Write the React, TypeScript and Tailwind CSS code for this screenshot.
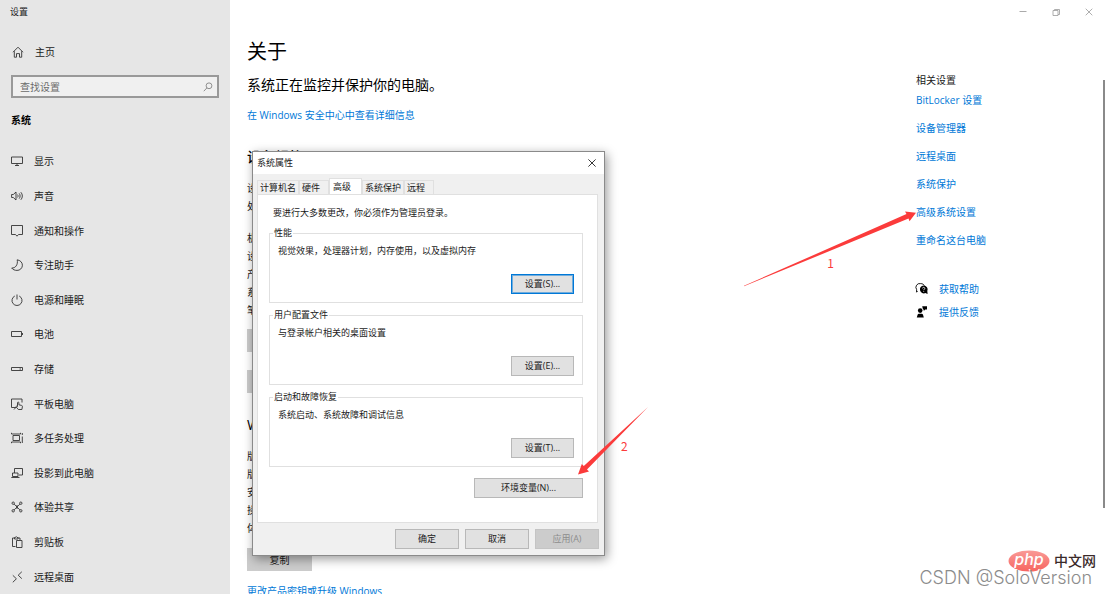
import type { ReactNode } from "react";

const icons: Record<string, ReactNode> = {
  home: <path d="M1 6.2 6 1.2l5 5M2.3 5.2v6h2.2V7.6h3v3.6h2.2v-6" />,
  display: <path d="M.5 2h11v6.5H.5zM6 8.5v2M4 10.5h4" />,
  sound: (
    <path d="M.6 4.5v3h1.7L5 10V2L2.3 4.5zM6.6 4.6c.6.9.6 1.9 0 2.8M8.2 3.4c1.2 1.6 1.2 3.6 0 5.2M9.8 2.2c2 2.3 2 5.3 0 7.6" />
  ),
  notify: <path d="M.5 .5h11v9H7.500L6 11.200 4.500 9.500H.5z" />,
  moon: <path d="M6.200.8c3 .5 5.200 2.600 5.200 5.400A5.200 5.200 0 0 1 6 11.400C3.800 11.400 1.800 10.600.7 9c3.600.4 6.500-3.200 5.500-8.200z" />,
  power: <path d="M6 .5v5M3.800 2A5 5 0 1 0 8.200 2" />,
  battery: <path d="M.5 3.500h10v5H.5zM11.500 5v2" />,
  storage: <path d="M.5 4.500h11v3H.5zM8.500 6h1.500" />,
  tablet: (
    <path d="M5 9.500H.5V1h10.500v3.500M3 11.500l1.800-2M6.500 8.500V4.800c0-1 1.400-1 1.400 0v2l2.600.6c.8.2 1 .6.9 1.300l-.5 2.800H7.300L5.200 9c-.3-.7.4-1.300 1.300-.5z" />
  ),
  multitask: (
    <path d="M2 3.500h6.500v5H2zM.5 .800v1.200h9V.8M.5 11.200V10h9v1.200M11.300 1v2M11.300 4.500V11" />
  ),
  project: <path d="M3.500 6V1.500h8V8H8M1.500 6h5.500v3.500H1.500zM.3 10.500h8.200" />,
  share: (
    <>
      <path d="M3 3c2 2.600 4 2.600 6 0M3 9c2-2.600 4-2.600 6 0M4.500 4.500l3 3M7.500 4.500l-3 3" />
      <circle cx="2.200" cy="2.200" r="1.200" />
      <circle cx="9.800" cy="2.200" r="1.200" />
      <circle cx="2.200" cy="9.800" r="1.200" />
      <circle cx="9.800" cy="9.800" r="1.200" />
    </>
  ),
  clipboard: <path d="M4.500 10.500H1.500V2h2M7 2h2v2M3.500 3V1.500h1L5.200.5l.8 1h1V3zM5.500 4.500h5.500v7H5.500z" />,
  remote: <path d="M1.800 4.300l3.600 3.500-3.600 3.500M10.800.8 7.200 4.200l3.600 3.400" />,
};

function Icon({ name }: { name: string }) {
  return (
    <svg
      viewBox="0 0 12 12"
      className="size-3 shrink-0 overflow-visible"
      fill="none"
      stroke="#333"
      strokeWidth="0.900"
      aria-hidden="true"
    >
      {icons[name]}
    </svg>
  );
}

const navItems = [
  { icon: "display", label: "显示" },
  { icon: "sound", label: "声音" },
  { icon: "notify", label: "通知和操作" },
  { icon: "moon", label: "专注助手" },
  { icon: "power", label: "电源和睡眠" },
  { icon: "battery", label: "电池" },
  { icon: "storage", label: "存储" },
  { icon: "tablet", label: "平板电脑" },
  { icon: "multitask", label: "多任务处理" },
  { icon: "project", label: "投影到此电脑" },
  { icon: "share", label: "体验共享" },
  { icon: "clipboard", label: "剪贴板" },
  { icon: "remote", label: "远程桌面" },
];

const relatedLinks = [
  "BitLocker 设置",
  "设备管理器",
  "远程桌面",
  "系统保护",
  "高级系统设置",
  "重命名这台电脑",
];

const tabs = [
  { label: "计算机名", className: "h-[14px] px-[2px]" },
  { label: "硬件", className: "h-[14px] pr-2 pl-[2px]" },
  { label: "高级", className: "h-4 bg-white pr-[10px] pl-[3px]", active: true },
  { label: "系统保护", className: "h-[14px] px-[2px]" },
  { label: "远程", className: "h-[14px] pr-2 pl-[2px]" },
];

const groups = [
  { title: "性能", text: "视觉效果，处理器计划，内存使用，以及虚拟内存", button: "设置(S)...", focused: true },
  { title: "用户配置文件", text: "与登录帐户相关的桌面设置", button: "设置(E)..." },
  { title: "启动和故障恢复", text: "系统启动、系统故障和调试信息", button: "设置(T)..." },
];

function Sidebar() {
  return (
    <aside className="flex w-[230px] shrink-0 flex-col bg-[#e6e6e6] text-[#1a1a1a]">
      <div className="h-6 pl-[10px] text-[9px] leading-6">设置</div>
      <a href="#home" className="mt-5 flex h-4 items-center gap-[11px] pl-3">
        <Icon name="home" />
        主页
      </a>
      <label className="mt-[15px] mr-[11px] ml-[11px] flex h-[23px] items-center border-2 border-[#999] bg-[#f0f0f0] pr-1 pl-[7px]">
        <input
          type="text"
          aria-label="查找设置"
          placeholder="查找设置"
          className="min-w-0 flex-1 bg-transparent outline-none placeholder:text-[#6b6b6b]"
        />
        <svg viewBox="0 0 10 10" className="size-[10px]" fill="none" stroke="#777" strokeWidth="0.800" aria-hidden="true">
          <circle cx="6" cy="3.800" r="2.900" />
          <path d="M3.900 5.900.8 9.200" />
        </svg>
      </label>
      <h2 className="mt-[14px] pl-[11px] font-bold text-black">系统</h2>
      <nav className="mt-4 flex flex-1 flex-col">
        {navItems.map((item) => (
          <a key={item.label} href="#nav" className="flex flex-1 items-center gap-[11px] pl-[11px]">
            <Icon name={item.icon} />
            {item.label}
          </a>
        ))}
      </nav>
    </aside>
  );
}

function WindowControls() {
  return (
    <div className="flex h-6 shrink-0 justify-end pr-px">
      <button type="button" aria-label="最小化" className="flex w-[33px] items-center justify-center">
        <svg viewBox="0 0 8 8" className="size-2" stroke="#aaa" aria-hidden="true">
          <path d="M.5 3.500h7" />
        </svg>
      </button>
      <button type="button" aria-label="还原" className="flex w-[33px] items-center justify-center">
        <svg viewBox="0 0 8 8" className="size-2" fill="none" stroke="#999" aria-hidden="true">
          <path d="M1 2.500h5v5H1zM2.500 2.500v-1h5v5H6" strokeWidth="0.800" />
        </svg>
      </button>
      <button type="button" aria-label="关闭" className="flex w-[33px] items-center justify-center">
        <svg viewBox="0 0 8 8" className="size-2" stroke="#999" strokeWidth="0.800" aria-hidden="true">
          <path d="M.7.7l6.600 6.600M7.300.7.7 7.300" />
        </svg>
      </button>
    </div>
  );
}

function About() {
  return (
    <section className="flex-1 pt-[14px] pl-[17px] text-[#1a1a1a]">
      <h1 className="text-[20px] leading-7 text-black">关于</h1>
      <p className="mt-[9px] text-[14px] leading-5 text-black">系统正在监控并保护你的电脑。</p>
      <a href="#security" className="mt-3 block text-[#0078d7]">
        在 Windows 安全中心中查看详细信息
      </a>
      <h2 className="mt-6 text-[14px] leading-5 font-medium text-black">设备规格</h2>
      <ul className="mt-3 leading-[18px]">
        <li>设备名称</li>
        <li>处理器</li>
        <li className="mt-[14px]">机带 RAM</li>
        <li>设备 ID</li>
        <li>产品 ID</li>
        <li>系统类型</li>
        <li>笔和触控</li>
      </ul>
      <button type="button" className="mt-[10px] block h-[23px] w-[65px] bg-[#ccc]">
        复制
      </button>
      <button type="button" className="mt-[18px] block h-[23px] w-[120px] bg-[#ccc]">
        重命名这台电脑
      </button>
      <h2 className="mt-[22px] text-[14px] leading-5 font-medium text-black">Windows 规格</h2>
      <ul className="mt-3 leading-[18px]">
        <li>版本</li>
        <li>版本号</li>
        <li>安装日期</li>
        <li>操作系统内部版本</li>
        <li>体验</li>
      </ul>
      <button type="button" className="mt-[11px] block h-[23px] w-[65px] bg-[#ccc]">
        复制
      </button>
      <a href="#upgrade" className="mt-3 block text-[#0078d7]">
        更改产品密钥或升级 Windows
      </a>
    </section>
  );
}

function Related() {
  return (
    <aside className="w-[187px] shrink-0 pt-12 text-[#0078d7]">
      <h2 className="text-[#1a1a1a]">相关设置</h2>
      <nav className="mt-1 flex flex-col items-start gap-3">
        {relatedLinks.map((link) => (
          <a key={link} href="#related">
            {link}
          </a>
        ))}
      </nav>
      <div className="mt-[33px] flex flex-col items-start gap-[7px]">
        <a href="#help" className="flex items-center gap-[11px]">
          <svg viewBox="0 0 12 12" className="size-3 overflow-visible" aria-hidden="true">
            <path d="M1.500 8 .6 9.200V6.500A3.800 3.800 0 0 1 4.500.6c2 0 3.200.8 3.900 2" fill="none" stroke="#000" strokeWidth="0.900" />
            <path d="M7.600 2.400a4 4 0 0 1 3.700 5.600l.3 3-2.200-.9a4 4 0 1 1-1.800-7.700z" fill="#000" />
            <path d="M6.500 5.400c0-1.500 2.300-1.400 2.300 0 0 .8-1.100.8-1.100 1.700M7.700 7.900v.9" fill="none" stroke="#fff" strokeWidth="0.800" />
          </svg>
          获取帮助
        </a>
        <a href="#feedback" className="flex items-center gap-[11px]">
          <svg viewBox="0 0 12 12" className="size-3 overflow-visible" fill="#000" aria-hidden="true">
            <circle cx="4.200" cy="4.600" r="2.300" />
            <path d="M.8 11.500l.8-2.800c.2-.7.600-1 1.300-1h2.800c.7 0 1.100.3 1.300 1l.8 2.800zM6.200.2h4.800v3.200H9.200L7.800 4.900V3.400H7z" />
          </svg>
          提供反馈
        </a>
      </div>
    </aside>
  );
}

function DialogButton({ children, className = "" }: { children: ReactNode; className?: string }) {
  return (
    <button type="button" className={`h-5 border bg-[#e1e1e1] ${className}`}>
      {children}
    </button>
  );
}

function SystemDialog() {
  return (
    <div
      role="dialog"
      aria-label="系统属性"
      className="absolute top-[151px] left-[252px] w-[353px] border border-[#8a8a8a] bg-[#f0f0f0] text-[9px] leading-3 text-[#1a1a1a] shadow-[2px_3px_10px_rgba(0,0,0,0.4)]"
    >
      <div className="flex h-[22px] items-center justify-between bg-white pr-2 pl-1">
        <span>系统属性</span>
        <button type="button" aria-label="关闭" className="flex size-2">
          <svg viewBox="0 0 8 8" className="size-2" stroke="#222" strokeWidth="0.900" aria-hidden="true">
            <path d="M.4.4l7.200 7.200M7.600.4.4 7.600" />
          </svg>
        </button>
      </div>
      <div className="pt-1 pr-[6px] pl-1">
        <div role="tablist" className="flex items-end">
          {tabs.map((tab) => (
            <button
              key={tab.label}
              type="button"
              role="tab"
              aria-selected={!!tab.active}
              className={`border border-b-0 border-[#e0e0e0] ${tab.className}`}
            >
              {tab.label}
            </button>
          ))}
        </div>
        <div className="border border-[#e0e0e0] bg-white pt-3 pr-[14px] pb-6 pl-[11px]">
          <p className="ml-1">要进行大多数更改，你必须作为管理员登录。</p>
          <div className="mt-2 flex flex-col gap-[6px]">
            {groups.map((group) => (
              <fieldset key={group.title} className="h-[76px] border border-[#e0e0e0] px-2">
                <legend className="-ml-[5px] px-[1px]">{group.title}</legend>
                <p className="pt-[6px]">{group.text}</p>
                <div className="mt-[17px] flex justify-end">
                  <DialogButton
                    className={
                      group.focused ? "w-[63px] border-[#0078d7] ring-1 ring-[#0078d7]/50 ring-inset" : "w-[63px] border-[#b8b8b8]"
                    }
                  >
                    {group.button}
                  </DialogButton>
                </div>
              </fieldset>
            ))}
          </div>
          <div className="mt-[11px] flex justify-end">
            <DialogButton className="w-[109px] border-[#b8b8b8]">环境变量(N)...</DialogButton>
          </div>
        </div>
      </div>
      <div className="flex justify-end gap-[6px] px-[5px] pt-[6px] pb-[6px]">
        <DialogButton className="w-16 border-[#b8b8b8]">确定</DialogButton>
        <DialogButton className="w-16 border-[#b8b8b8]">取消</DialogButton>
        <button type="button" disabled className="h-5 w-16 border border-[#c4c4c4] bg-[#ccc] text-[#8c8c8c]">
          应用(A)
        </button>
      </div>
    </div>
  );
}

function Arrows() {
  return (
    <div className="pointer-events-none font-['Noto_Sans_CJK_SC',sans-serif] text-[12px] leading-4 text-[#fb3b3b]">
      <svg viewBox="0 0 172 76" className="absolute top-[211px] right-[190px] h-[76px] w-[172px]" fill="#fb3b3b" aria-hidden="true">
        <path d="M0 74.800 162.500 3 161 .6 172 1.800 165.500 10.200 164.500 7.600 0 75.200z" />
      </svg>
      <span className="absolute top-[255px] right-[272px]">1</span>
      <svg viewBox="0 0 70 68" className="absolute top-[407px] left-[578px] h-[68px] w-[70px]" fill="#fb3b3b" aria-hidden="true">
        <path d="M70 0 9 62.500 11 64.500 0 67.500 3.800 57 5.800 59z" />
      </svg>
      <span className="absolute top-[438px] left-[621px]">2</span>
    </div>
  );
}

function Watermark() {
  return (
    <div className="pointer-events-none absolute right-[10px] bottom-[5px]">
      <div className="flex items-center justify-end gap-1">
        <svg viewBox="0 0 42 22" className="h-[22px] w-[42px]" aria-hidden="true">
          <defs>
            <linearGradient id="php" x1="0" y1="0" x2="0" y2="1">
              <stop offset="0" stopColor="#f99a96" />
              <stop offset="1" stopColor="#f76560" />
            </linearGradient>
          </defs>
          <ellipse cx="21" cy="11" rx="20.500" ry="10.500" fill="url(#php)" />
          <text x="21" y="15" textAnchor="middle" fontSize="16" fontStyle="italic" fontWeight="500" fontFamily="Inter, sans-serif" fill="#fff">
            php
          </text>
        </svg>
        <span className="text-[14px] leading-[22px] font-medium text-[#3a2a2a]">中文网</span>
      </div>
      <div className="-mt-[5px] pr-1 text-right font-['Inter',sans-serif] text-[18px] leading-[22px] font-light text-[#8c8c8c] [text-shadow:-1px_-1px_0_#fff]">
        CSDN @SoloVersion
      </div>
    </div>
  );
}

export default function App() {
  return (
    <div className="relative flex h-screen overflow-hidden bg-white font-['Open_Sans','Noto_Sans_CJK_SC',sans-serif] text-[10px] leading-4">
      <Sidebar />
      <main className="flex min-w-0 flex-1 flex-col">
        <WindowControls />
        <div className="flex min-h-0 flex-1">
          <About />
          <Related />
          <div className="mt-14 mr-px h-[75%] w-[2px] bg-[#8a8a8a]" />
        </div>
      </main>
      <SystemDialog />
      <Arrows />
      <Watermark />
    </div>
  );
}
